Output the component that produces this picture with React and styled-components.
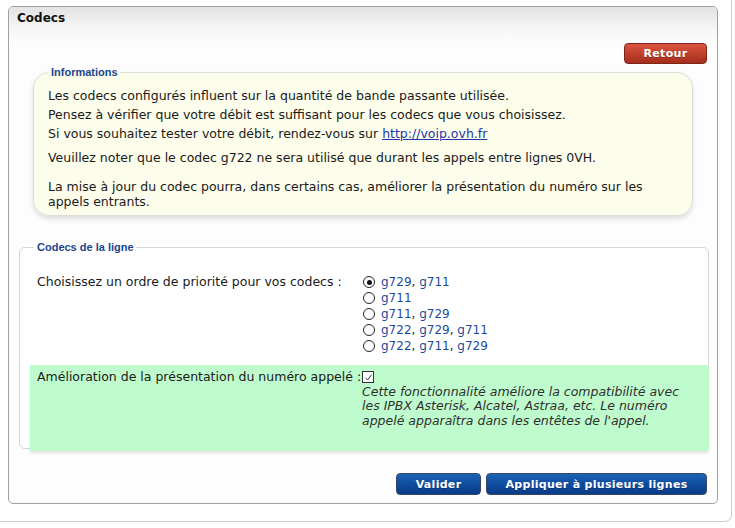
import React from "react";
import styled, { createGlobalStyle } from "styled-components";

const GlobalStyle = createGlobalStyle`
    html, body {
        margin: 0;
        padding: 0;
        background: #ffffff;
    }
    body {
        font-family: "DejaVu Sans", Verdana, sans-serif;
        font-size: 12.5px;
        color: #1a1a1a;
    }
`;

const Page = styled.div`
    box-sizing: border-box;
    width: 732px;
    height: 522px;
    padding: 6px 0 0 8px;
    border-right: 1px solid #cfcfcf;
    border-bottom: 1px solid #cfcfcf;
    border-bottom-right-radius: 7px;
`;

const Panel = styled.div`
    box-sizing: border-box;
    width: 710px;
    border: 1px solid #a0a0a0;
    border-radius: 5px;
    background: #fdfdfd;
    padding-bottom: 8px;
`;

const PanelHeader = styled.div`
    height: 36px;
    padding: 0 8px;
    border-radius: 4px 4px 0 0;
    background: linear-gradient(#e3e3e3, #f6f6f6 60%, #fdfdfd);

    h1 {
        margin: 0;
        font-size: 12px;
        font-weight: bold;
        line-height: 22px;
        color: #111;
    }
`;

const ButtonRow = styled.div`
    display: flex;
    justify-content: flex-end;
    gap: 5px;
    padding-right: 10px;
    margin-top: ${({ $top }) => $top || 0}px;
`;

const Button = styled.button`
    box-sizing: border-box;
    height: ${({ $h }) => $h || 22}px;
    min-width: ${({ $w }) => $w}px;
    padding: 0 14px;
    border-radius: 4px;
    font-family: "DejaVu Sans", Verdana, sans-serif;
    font-size: 11px;
    font-weight: bold;
    letter-spacing: 0.3px;
    color: #ffffff;
    text-shadow: 0 1px 0 rgba(0, 0, 0, 0.25);
    cursor: pointer;
    border: 1px solid ${({ $red }) => ($red ? "#7c2518" : "#3a4660")};
    background: ${({ $red }) =>
        $red
            ? "linear-gradient(#dc5540, #c0412c 50%, #a42d1b)"
            : "linear-gradient(#1c63b6, #0f4c9e 50%, #093c88)"};
`;

const Fieldset = styled.fieldset`
    box-sizing: border-box;
    margin: ${({ $margin }) => $margin};
    padding: ${({ $padding }) => $padding};
    border: 1px solid ${({ $border }) => $border || "#d8d8d8"};
    border-radius: ${({ $radius }) => $radius}px;
    background: ${({ $bg }) => $bg || "#ffffff"};
    box-shadow: ${({ $shadow }) => $shadow || "none"};
    min-width: 0;
`;

const Legend = styled.legend`
    margin-left: ${({ $offset }) => $offset || 0}px;
    padding: 0 2px 0 3px;
    font-family: "Liberation Sans", Arial, sans-serif;
    font-size: 11px;
    font-weight: bold;
    line-height: 14px;
    color: #1b4690;
`;

const InfoText = styled.p`
    margin: 0 0 ${({ $after }) => $after}px;
    line-height: 14.5px;

    a {
        color: #2338a8;
        text-decoration: underline;
    }
`;

const FormRow = styled.div`
    display: grid;
    grid-template-columns: 332px 1fr;
    margin: ${({ $margin }) => $margin || 0};
    padding: ${({ $padding }) => $padding || 0};
    background: ${({ $highlight }) => ($highlight ? "#bffccd" : "transparent")};
    border-bottom-right-radius: ${({ $highlight }) => ($highlight ? 4 : 0)}px;
    box-shadow: ${({ $highlight }) =>
        $highlight ? "0 2px 3px rgba(0, 0, 0, 0.12)" : "none"};
    position: relative;
`;

const FieldLabel = styled.div`
    padding-left: 7px;
    line-height: 16px;
`;

const OptionList = styled.div`
    display: flex;
    flex-direction: column;
`;

const Option = styled.label`
    display: flex;
    align-items: center;
    height: 16px;
    font-size: 12px;
    cursor: pointer;
`;

const Radio = styled.input.attrs({ type: "radio" })`
    appearance: none;
    box-sizing: border-box;
    width: 12px;
    height: 12px;
    margin: 0 6px 0 1px;
    border: 1px solid #222;
    border-radius: 50%;
    background: #fff;
    display: grid;
    place-content: center;

    &::before {
        content: "";
        width: 5px;
        height: 5px;
        border-radius: 50%;
        background: #111;
        transform: scale(${({ checked }) => (checked ? 1 : 0)});
    }
`;

const CodecLink = styled.a`
    color: #1f4a97;
    text-decoration: none;
`;

const Sep = styled.span`
    color: #222;
`;

const CheckBox = styled.span`
    box-sizing: border-box;
    display: inline-flex;
    align-items: center;
    justify-content: center;
    width: 12px;
    height: 12px;
    margin-top: 2px;
    border: 1px solid #333;
    background: #fff;
`;

const Hint = styled.div`
    max-width: 336px;
    font-style: italic;
    line-height: 14.5px;
    color: #2f2f2f;
`;

const codecOptions = [
    ["g729", "g711"],
    ["g711"],
    ["g711", "g729"],
    ["g722", "g729", "g711"],
    ["g722", "g711", "g729"],
];

const App = () => {
    return (
        <>
            <GlobalStyle />
            <Page>
                <Panel>
                    <PanelHeader>
                        <h1>Codecs</h1>
                    </PanelHeader>

                    <ButtonRow>
                        <Button $red $h={21} $w={83}>
                            Retour
                        </Button>
                    </ButtonRow>

                    <Fieldset
                        $margin="1px 24px 0"
                        $padding="10px 14px 6px"
                        $radius={16}
                        $bg="#fdfdeb"
                        $border="#dcdcd6"
                        $shadow="0 3px 5px rgba(0, 0, 0, 0.13)"
                    >
                        <Legend>Informations</Legend>
                        <InfoText $after={4.5}>
                            Les codecs configurés influent sur la quantité de bande passante utilisée.
                        </InfoText>
                        <InfoText $after={4.5}>
                            Pensez à vérifier que votre débit est suffisant pour les codecs que vous choisissez.
                        </InfoText>
                        <InfoText $after={9.5}>
                            Si vous souhaitez tester votre débit, rendez-vous sur{" "}
                            <a href="#">http://voip.ovh.fr</a>
                        </InfoText>
                        <InfoText $after={0}>
                            Veuillez noter que le codec g722 ne sera utilisé que durant les appels entre lignes 0VH.
                            <br />
                            <br />
                            La mise à jour du codec pourra, dans certains cas, améliorer la présentation du numéro sur les appels entrants.
                        </InfoText>
                    </Fieldset>

                    <Fieldset
                        $margin="24px 8px 0 10px"
                        $padding="20px 0 0 10px"
                        $radius={6}
                        $border="#d6d6d6"
                    >
                        <Legend $offset={4}>Codecs de la ligne</Legend>

                        <FormRow>
                            <FieldLabel>Choisissez un ordre de priorité pour vos codecs :</FieldLabel>
                            <OptionList>
                                {codecOptions.map((codecs, i) => (
                                    <Option key={i}>
                                        <Radio name="codecs" checked={i === 0} readOnly />
                                        <span>
                                            {codecs.map((c, j) => (
                                                <React.Fragment key={c}>
                                                    {j > 0 && <Sep>, </Sep>}
                                                    <CodecLink href="#">{c}</CodecLink>
                                                </React.Fragment>
                                            ))}
                                        </span>
                                    </Option>
                                ))}
                            </OptionList>
                        </FormRow>

                        <FormRow $highlight $margin="11px -1px -3px 0" $padding="4px 0 23px">
                            <FieldLabel>Amélioration de la présentation du numéro appelé :</FieldLabel>
                            <div>
                                <CheckBox>
                                    <svg width="9" height="9" viewBox="0 0 9 9">
                                        <path d="M1.5 4.8 L3.6 7 L7.6 1.6" fill="none" stroke="#333" strokeWidth="1" />
                                    </svg>
                                </CheckBox>
                                <Hint>
                                    Cette fonctionnalité améliore la compatibilité avec les IPBX Asterisk, Alcatel, Astraa, etc. Le numéro appelé apparaîtra dans les entêtes de l'appel.
                                </Hint>
                            </div>
                        </FormRow>
                    </Fieldset>

                    <ButtonRow $top={24}>
                        <Button $w={85}>Valider</Button>
                        <Button $w={221}>Appliquer à plusieurs lignes</Button>
                    </ButtonRow>
                </Panel>
            </Page>
        </>
    );
};

export default App;
